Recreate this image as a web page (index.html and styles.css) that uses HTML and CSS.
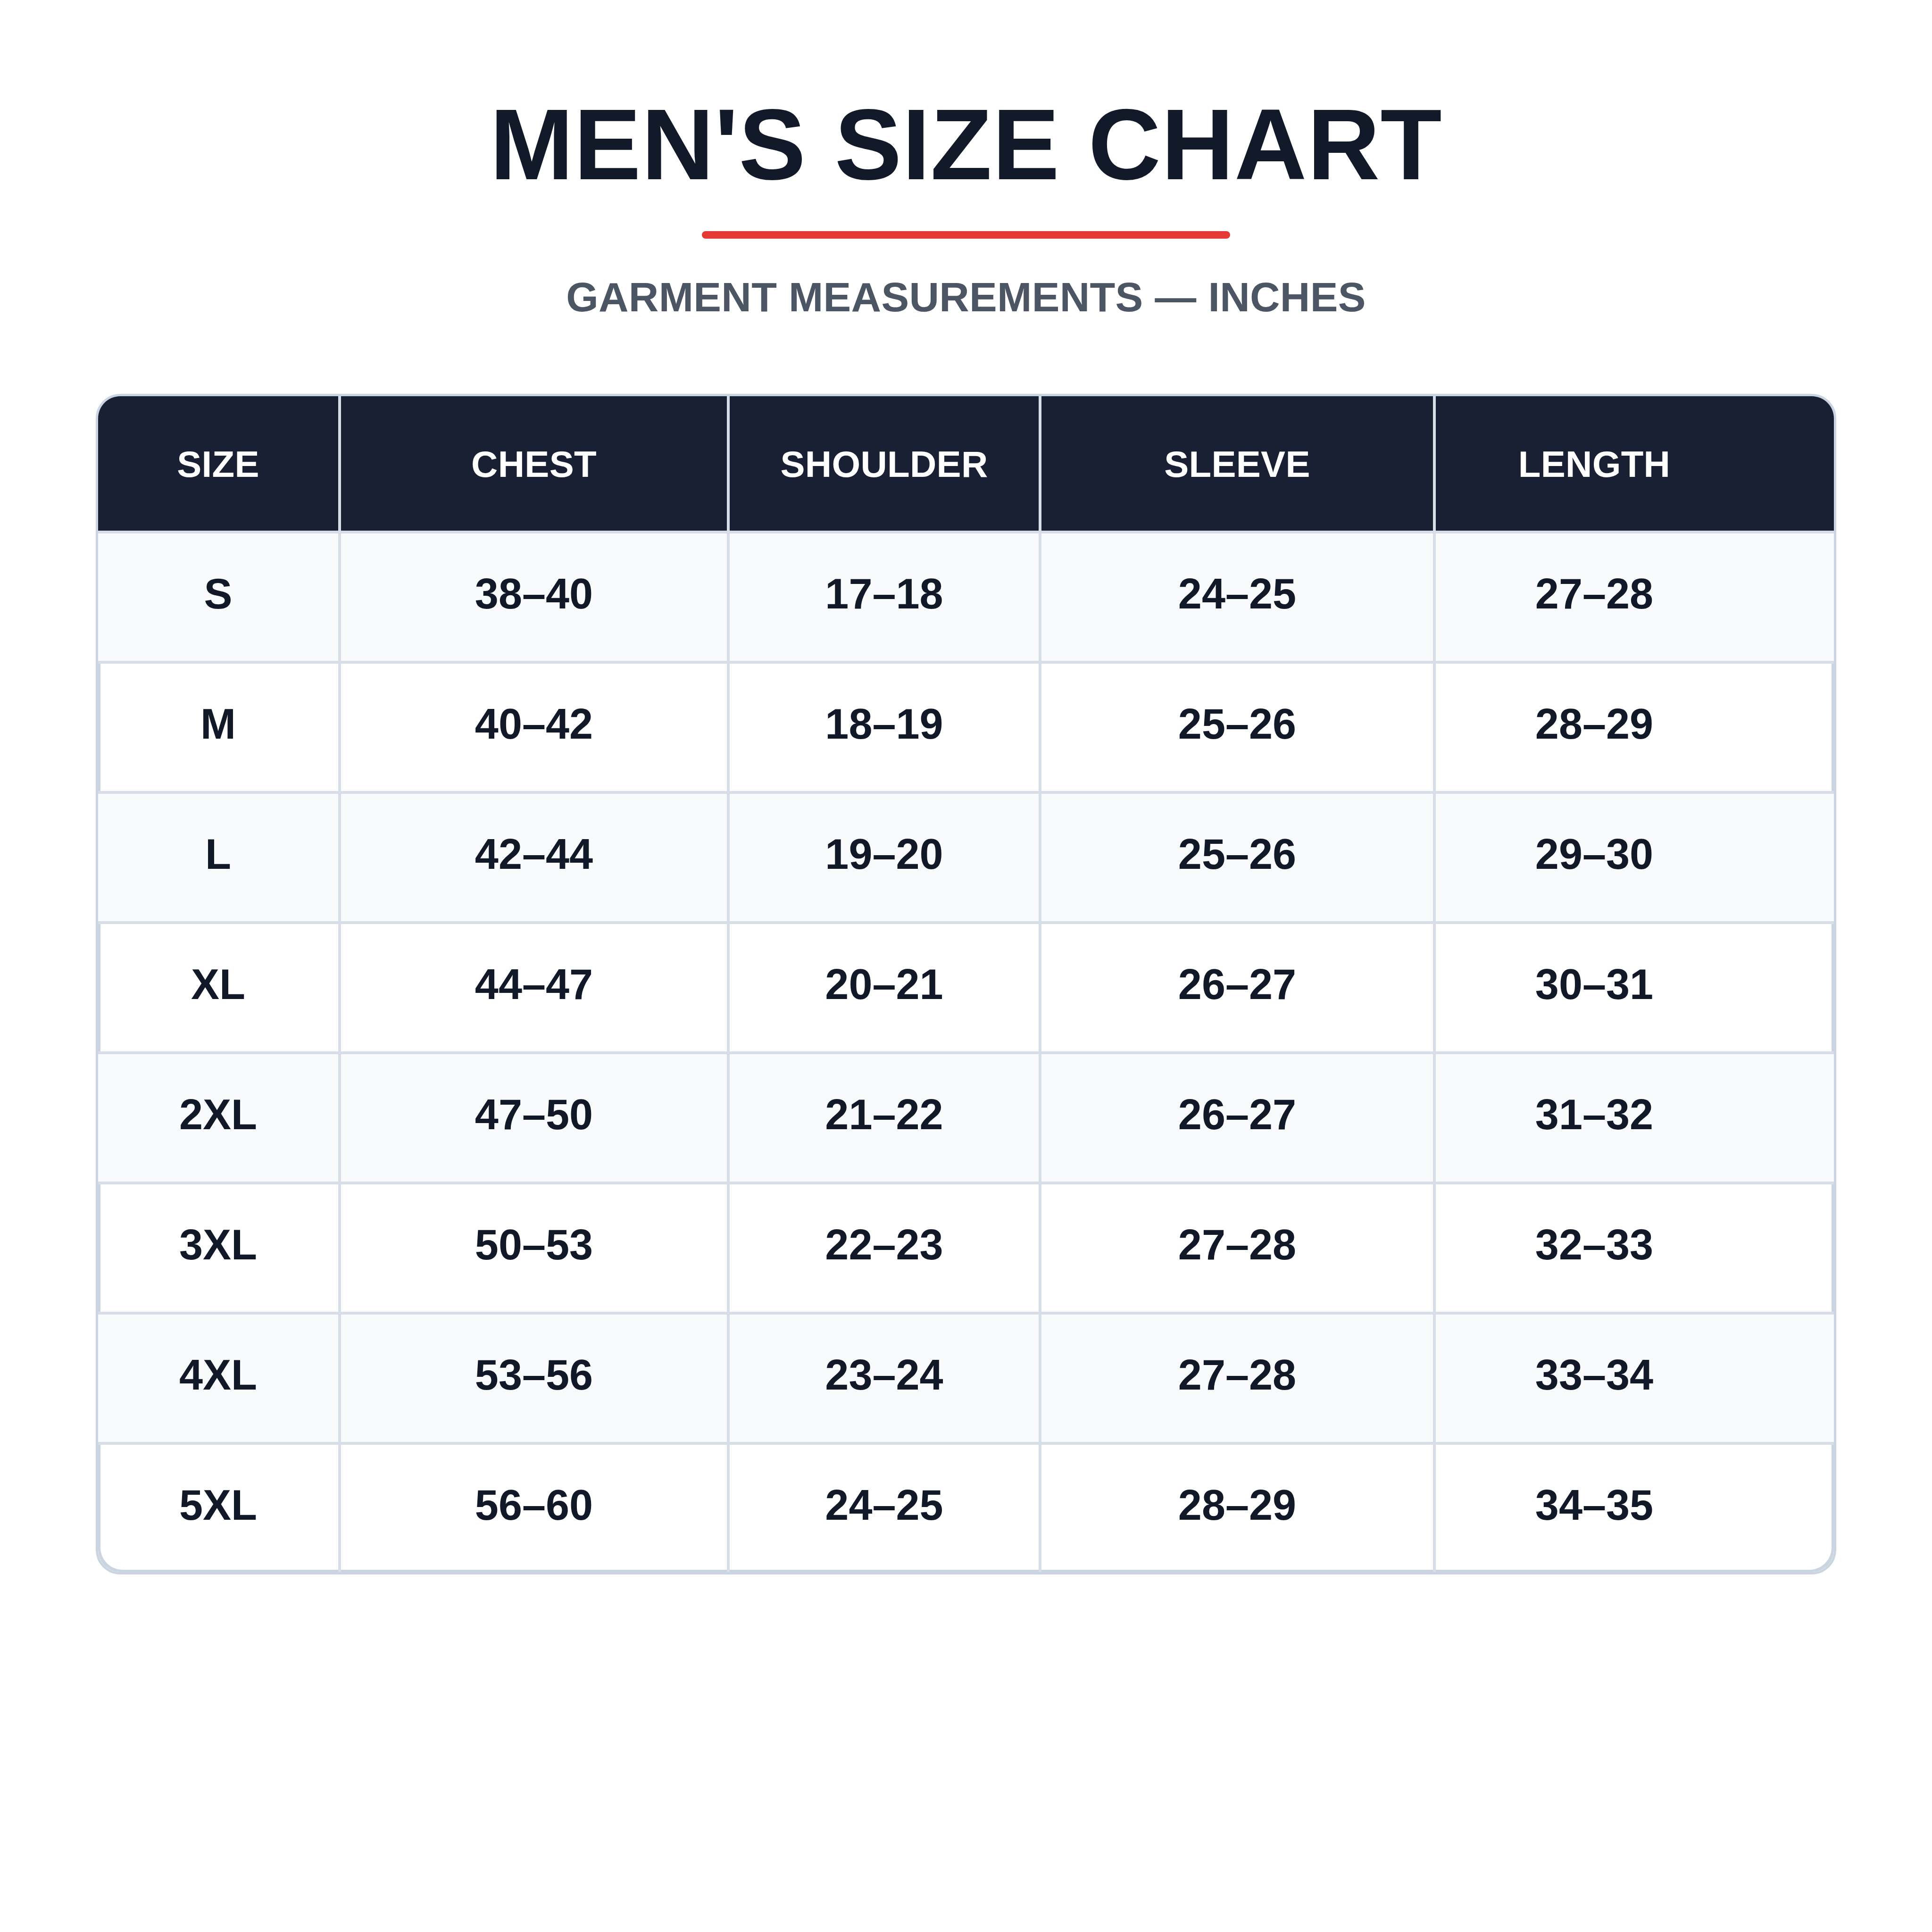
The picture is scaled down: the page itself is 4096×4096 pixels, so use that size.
FILE: index.html
```html
<!DOCTYPE html>
<html lang="en">
<head>
<meta charset="utf-8">
<title>Men's Size Chart</title>
<link rel="stylesheet" href="styles.css">
</head>
<body>
<main class="page">
  <header class="heading">
    <h1 class="title">MEN'S SIZE CHART</h1>
    <div class="rule"></div>
    <p class="subtitle">GARMENT MEASUREMENTS — INCHES</p>
  </header>

  <div class="chart" role="table">
    <div class="grid">
      <div class="row head-row" role="row">
        <div class="cell head" role="columnheader">SIZE</div>
        <div class="cell head" role="columnheader">CHEST</div>
        <div class="cell head" role="columnheader">SHOULDER</div>
        <div class="cell head" role="columnheader">SLEEVE</div>
        <div class="cell head" role="columnheader">LENGTH</div>
      </div>
      <div class="row alt" role="row">
        <div class="cell" role="cell">S</div><div class="cell" role="cell">38–40</div><div class="cell" role="cell">17–18</div><div class="cell" role="cell">24–25</div><div class="cell" role="cell">27–28</div>
      </div>
      <div class="row plain" role="row">
        <div class="cell" role="cell">M</div><div class="cell" role="cell">40–42</div><div class="cell" role="cell">18–19</div><div class="cell" role="cell">25–26</div><div class="cell" role="cell">28–29</div>
      </div>
      <div class="row alt" role="row">
        <div class="cell" role="cell">L</div><div class="cell" role="cell">42–44</div><div class="cell" role="cell">19–20</div><div class="cell" role="cell">25–26</div><div class="cell" role="cell">29–30</div>
      </div>
      <div class="row plain" role="row">
        <div class="cell" role="cell">XL</div><div class="cell" role="cell">44–47</div><div class="cell" role="cell">20–21</div><div class="cell" role="cell">26–27</div><div class="cell" role="cell">30–31</div>
      </div>
      <div class="row alt" role="row">
        <div class="cell" role="cell">2XL</div><div class="cell" role="cell">47–50</div><div class="cell" role="cell">21–22</div><div class="cell" role="cell">26–27</div><div class="cell" role="cell">31–32</div>
      </div>
      <div class="row plain" role="row">
        <div class="cell" role="cell">3XL</div><div class="cell" role="cell">50–53</div><div class="cell" role="cell">22–23</div><div class="cell" role="cell">27–28</div><div class="cell" role="cell">32–33</div>
      </div>
      <div class="row alt" role="row">
        <div class="cell" role="cell">4XL</div><div class="cell" role="cell">53–56</div><div class="cell" role="cell">23–24</div><div class="cell" role="cell">27–28</div><div class="cell" role="cell">33–34</div>
      </div>
      <div class="row plain last" role="row">
        <div class="cell" role="cell">5XL</div><div class="cell" role="cell">56–60</div><div class="cell" role="cell">24–25</div><div class="cell" role="cell">28–29</div><div class="cell" role="cell">34–35</div>
      </div>
    </div>
  </div>
</main>
</body>
</html>
```

FILE: styles.css
```css
* { box-sizing: border-box; }

html, body {
  margin: 0;
  padding: 0;
  background: #ffffff;
}

body {
  font-family: "Liberation Sans", Arial, Helvetica, sans-serif;
  color: #111827;
}

.page {
  width: 4096px;
  padding-top: 200px;
}

.heading {
  display: flex;
  flex-direction: column;
  align-items: center;
}

.title {
  margin: 0;
  font-size: 213px;
  line-height: 213px;
  font-weight: 700;
  letter-spacing: 1px;
  color: #121a29;
  text-align: center;
}

.rule {
  width: 1120px;
  height: 16px;
  margin-top: 77px;
  border-radius: 8px;
  background: #e53936;
}

.subtitle {
  margin: 80px 0 0;
  font-size: 88px;
  line-height: 88px;
  font-weight: 700;
  letter-spacing: 0.3px;
  color: #4b5563;
  text-align: center;
}

.chart {
  width: 3690px;
  margin: 161px auto 0;
  border: 5px solid #cbd5e1;
  border-radius: 52px;
  overflow: hidden;
}

.grid {
  display: grid;
  grid-template-columns: 509px 818px 655px 830px 844px;
  grid-template-rows: 285px repeat(8, 270px);
  gap: 6px;
  background: #d8dee8;
}

.row {
  display: contents;
}

.cell {
  display: flex;
  align-items: center;
  justify-content: center;
  font-weight: 700;
  font-size: 90px;
  color: #111827;
  padding-bottom: 14px;
}

.cell:last-child {
  padding-right: 172px;
}

.head {
  background: #1a2033;
  color: #ffffff;
  font-size: 78px;
  letter-spacing: 0.3px;
  padding-bottom: 0;
  padding-top: 4px;
}

.alt > .cell {
  background: #f8fafc;
}

.plain > .cell {
  background: #ffffff;
}

.plain > .cell:first-child {
  box-shadow: inset 5px 0 0 #cbd5e1;
}

.plain > .cell:last-child {
  box-shadow: inset -5px 0 0 #cbd5e1;
}

.last > .cell {
  box-shadow: inset 0 -5px 0 #cbd5e1;
}

.last > .cell:first-child {
  box-shadow: inset 5px -5px 0 #cbd5e1;
  border-bottom-left-radius: 47px;
}

.last > .cell:last-child {
  box-shadow: inset -5px -5px 0 #cbd5e1;
  border-bottom-right-radius: 47px;
}
```
